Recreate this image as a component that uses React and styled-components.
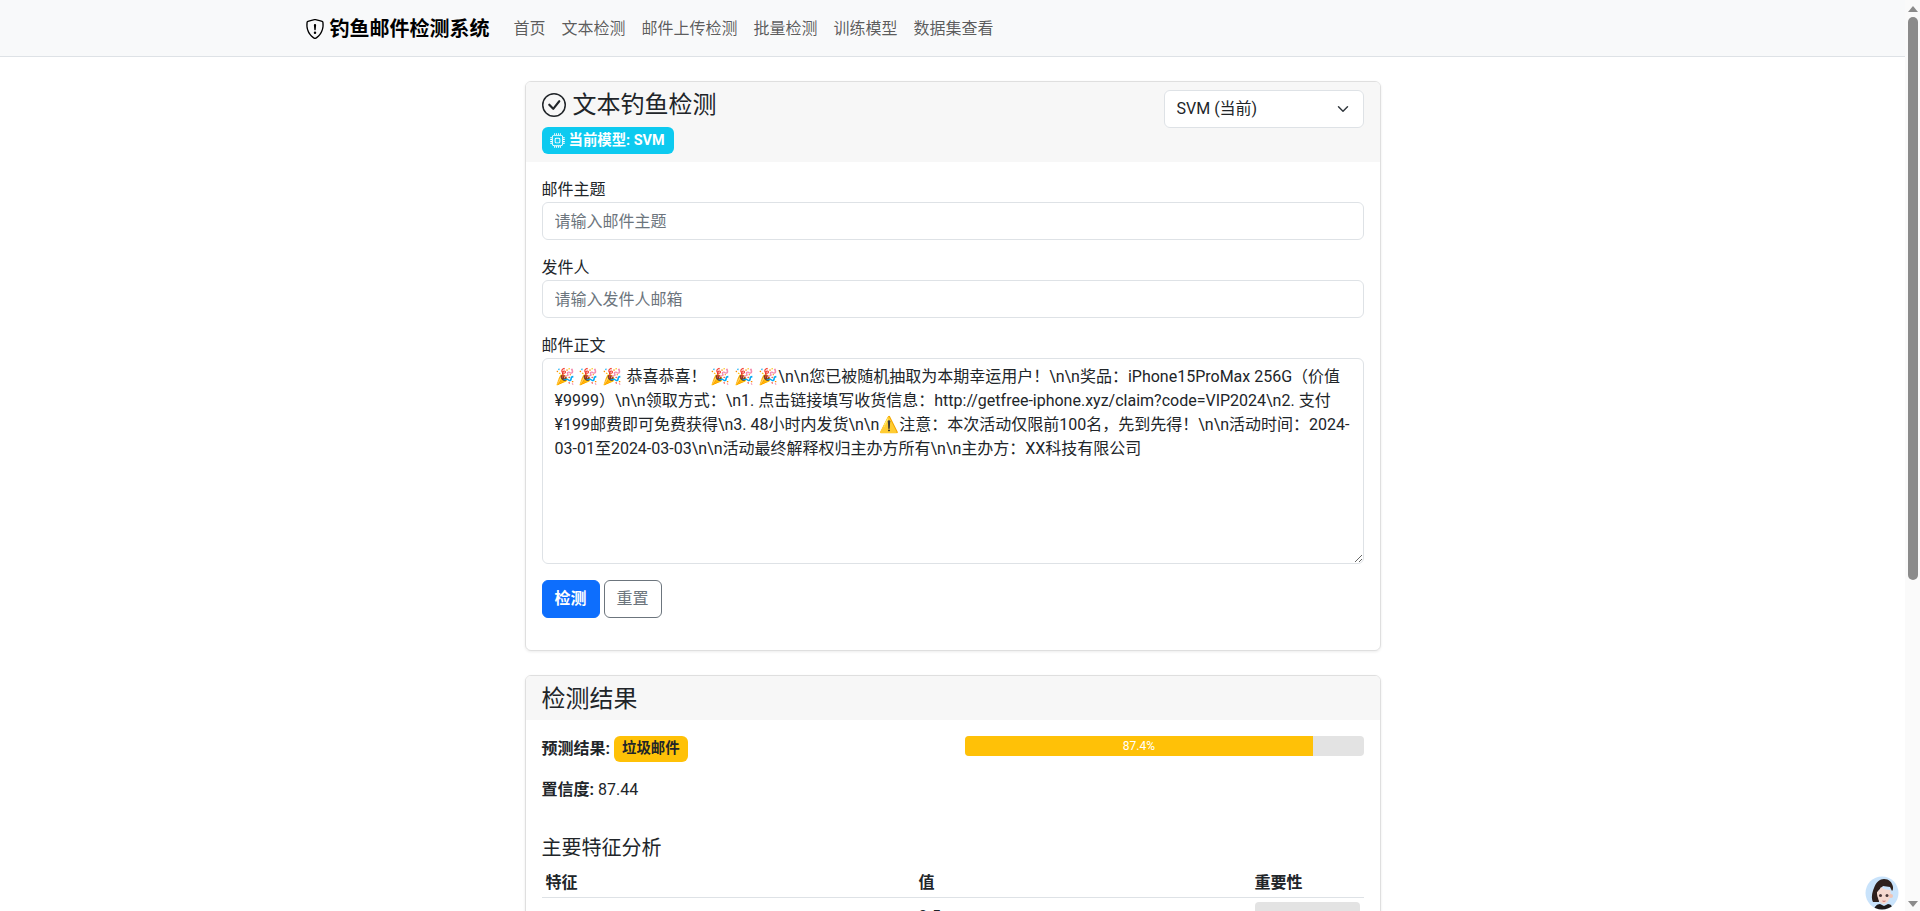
import styled, { createGlobalStyle } from "styled-components";

const GlobalStyle = createGlobalStyle`
    * {
        box-sizing: border-box;
    }

    html {
        overflow: hidden;
    }

    body {
        margin: 0;
        background: #fff;
        color: #212529;
        font-family: Roboto, "Noto Sans CJK SC", sans-serif;
        font-size: 16px;
        line-height: 1.5;
    }
`;

const Page = styled.div`
    padding-right: 15px;
`;

const Navbar = styled.nav`
    height: 57px;
    background: #f8f9fa;
    border-bottom: 1px solid #dee2e6;
`;

const NavInner = styled.div`
    width: 1320px;
    margin: 0 auto;
    padding: 2px 12px 0;
    height: 100%;
    display: flex;
    align-items: center;
`;

const Brand = styled.a`
    display: flex;
    align-items: center;
    gap: 5px;
    margin-right: 16px;
    font-size: 20px;
    font-weight: 700;
    color: #000;
`;

const NavLink = styled.a`
    padding: 8px;
    color: rgba(0, 0, 0, 0.65);
`;

const Main = styled.main`
    width: 880px;
    margin: 0 auto;
    padding: 24px 12px 0;
`;

const Card = styled.section`
    border: 1px solid rgba(0, 0, 0, 0.125);
    border-radius: 6px;
    margin-bottom: 24px;
    overflow: hidden;
    box-shadow: 0 1px 3px rgba(0, 0, 0, 0.08);
`;

const CardHeader = styled.header`
    background: #f7f7f7;
    padding: 8px 16px;
    display: flex;
    justify-content: space-between;
`;

const CardTitle = styled.h4`
    margin: 0;
    padding-top: 2px;
    font-size: 24px;
    font-weight: 400;
    line-height: 26px;
    display: flex;
    align-items: center;
    gap: 7px;
`;

const HeaderText = styled.div`
    display: flex;
    flex-direction: column;
    align-items: flex-start;
    gap: 9px;
`;

const Pill = styled.span`
    display: inline-flex;
    align-items: center;
    gap: 4px;
    padding: 0 9px 0 8px;
    height: 27px;
    border-radius: 6px;
    background: #0dcaf0;
    color: #fff;
    font-size: 14.4px;
    font-weight: 700;
`;

const SpamBadge = styled.span`
    display: inline-flex;
    align-items: center;
    padding: 0 8px;
    height: 26px;
    border-radius: 6px;
    background: #ffc107;
    color: #212529;
    font-size: 14.4px;
    font-weight: 700;
`;

const ModelSelect = styled.div`
    width: 200px;
    height: 38px;
    padding: 0 14px 0 12px;
    display: flex;
    align-items: center;
    justify-content: space-between;
    background: #fff;
    border: 1px solid #dee2e6;
    border-radius: 6px;
`;

const CardBody = styled.div`
    padding: 16px;
`;

const Field = styled.div`
    margin-bottom: 16px;
`;

const Label = styled.label`
    display: block;
`;

const Input = styled.input`
    display: block;
    width: 100%;
    height: 38px;
    padding: 6px 12px;
    border: 1px solid #dee2e6;
    border-radius: 6px;
    font: inherit;
    color: #212529;

    &::placeholder {
        color: #6c757d;
    }
`;

const TextArea = styled.textarea`
    display: block;
    width: 100%;
    height: 206px;
    padding: 6px 12px;
    border: 1px solid #dee2e6;
    border-radius: 6px;
    font: inherit;
    color: #212529;
`;

const Buttons = styled.div`
    display: flex;
    gap: 4px;
    margin-bottom: 16px;
`;

const Button = styled.button`
    height: 38px;
    padding: 0 12px;
    font: inherit;
    font-weight: ${(p) => (p.$primary ? 700 : 400)};
    color: ${(p) => (p.$primary ? "#fff" : "#6c757d")};
    background: ${(p) => (p.$primary ? "#0d6efd" : "#fff")};
    border: 1px solid ${(p) => (p.$primary ? "#0d6efd" : "#6c757d")};
    border-radius: 6px;
`;

const ResultRow = styled.div`
    display: grid;
    grid-template-columns: 1fr 1fr;
    gap: 24px;
`;

const Progress = styled.div`
    height: 20px;
    background: #e3e3e3;
    border-radius: 4px;
    overflow: hidden;
`;

const ProgressFill = styled.div`
    height: 100%;
    background: #ffc107;
    color: #fff;
    font-size: 12px;
    line-height: 20px;
    text-align: center;
`;

const Paragraph = styled.p`
    margin: 0 0 16px;
    display: flex;
    align-items: center;
    gap: 4px;
`;

const SubTitle = styled.h5`
    margin: 18px 0 8px;
    font-size: 20px;
    font-weight: 400;
    line-height: 24px;
`;

const Table = styled.table`
    width: 100%;
    border-collapse: collapse;
    table-layout: fixed;

    th {
        text-align: left;
        padding: 3px 4px 2px;
        border-bottom: 1px solid #dee2e6;
    }

    th:nth-child(1) {
        width: 373px;
    }

    th:nth-child(3) {
        width: 113px;
    }

    td {
        padding: 7px 4px 4px;
        border-bottom: 1px solid #dee2e6;
        vertical-align: top;
    }

    td:last-child {
        padding-top: 4px;
    }
`;

const Meter = styled.div`
    height: 20px;
    background: #e3e3e3;
    border-radius: 4px;
`;

const Scrollbar = styled.div`
    position: fixed;
    top: 0;
    right: 0;
    bottom: 0;
    width: 15px;
    background: #fafafa;
    display: flex;
    flex-direction: column;
    align-items: center;
    justify-content: space-between;
    padding: 6px 0 4px;
`;

const ScrollThumb = styled.div`
    position: absolute;
    top: 17px;
    left: 3px;
    width: 9.500px;
    height: 563px;
    border-radius: 5px;
    background: #8b8b8b;
`;

const Avatar = styled.div`
    position: fixed;
    left: 1865px;
    top: 876px;
    width: 34px;
    height: 34px;
`;

const ShieldIcon = () => (
    <svg width="20" height="20" viewBox="0 0 16 16" fill="currentColor">
        <path d="M5.338 1.59a61 61 0 0 0-2.837.856.48.48 0 0 0-.328.39c-.554 4.157.726 7.19 2.253 9.188a10.7 10.7 0 0 0 2.287 2.233c.346.244.652.42.893.533q.18.085.293.118a1 1 0 0 0 .101.025 1 1 0 0 0 .1-.025q.114-.034.294-.118c.24-.113.547-.29.893-.533a10.7 10.7 0 0 0 2.287-2.233c1.527-1.997 2.807-5.031 2.253-9.188a.48.48 0 0 0-.328-.39c-.651-.213-1.75-.56-2.837-.855C9.552 1.29 8.531 1.067 8 1.067c-.53 0-1.552.223-2.662.524zM5.072.56C6.157.265 7.31 0 8 0s1.843.265 2.928.56c1.11.3 2.229.655 2.887.87a1.54 1.54 0 0 1 1.044 1.262c.596 4.477-.787 7.795-2.465 9.99a11.8 11.8 0 0 1-2.517 2.453 7 7 0 0 1-1.048.625c-.28.132-.581.24-.829.24s-.548-.108-.829-.24a7 7 0 0 1-1.048-.625 11.8 11.8 0 0 1-2.517-2.453C1.928 10.487.545 7.169 1.141 2.692A1.54 1.54 0 0 1 2.185 1.43 63 63 0 0 1 5.072.56" />
        <path d="M7.001 11a1 1 0 1 1 2 0 1 1 0 0 1-2 0M7.1 4.995a.905.905 0 1 1 1.8 0l-.35 3.507a.553.553 0 0 1-1.1 0z" />
    </svg>
);

const CheckCircleIcon = () => (
    <svg width="24" height="24" viewBox="0 0 16 16" fill="currentColor">
        <path d="M8 15A7 7 0 1 1 8 1a7 7 0 0 1 0 14m0 1A8 8 0 1 0 8 0a8 8 0 0 0 0 16" />
        <path d="m10.97 4.97-.02.022-3.473 4.425-2.093-2.094a.75.75 0 0 0-1.06 1.06L6.97 11.03a.75.75 0 0 0 1.079-.02l3.992-4.99a.75.75 0 0 0-1.071-1.05" />
    </svg>
);

const CpuIcon = () => (
    <svg width="15" height="15" viewBox="0 0 16 16" fill="currentColor">
        <path d="M5 0a.5.5 0 0 1 .5.5V2h1V.5a.5.5 0 0 1 1 0V2h1V.5a.5.5 0 0 1 1 0V2h1V.5a.5.5 0 0 1 1 0V2A2.5 2.5 0 0 1 14 4.5h1.5a.5.5 0 0 1 0 1H14v1h1.5a.5.5 0 0 1 0 1H14v1h1.5a.5.5 0 0 1 0 1H14v1h1.5a.5.5 0 0 1 0 1H14a2.5 2.5 0 0 1-2.5 2.500v1.500a.5.5 0 0 1-1 0V14h-1v1.500a.5.5 0 0 1-1 0V14h-1v1.500a.5.5 0 0 1-1 0V14h-1v1.500a.5.5 0 0 1-1 0V14A2.5 2.5 0 0 1 2 11.500H.5a.5.5 0 0 1 0-1H2v-1H.5a.5.5 0 0 1 0-1H2v-1H.5a.5.5 0 0 1 0-1H2v-1H.5a.5.5 0 0 1 0-1H2A2.500 2.500 0 0 1 4.500 2V.5A.5.5 0 0 1 5 0m-.5 3A1.500 1.500 0 0 0 3 4.500v7A1.500 1.500 0 0 0 4.500 13h7a1.500 1.500 0 0 0 1.500-1.500v-7A1.500 1.500 0 0 0 11.500 3zM5 6.500A1.500 1.500 0 0 1 6.500 5h3A1.500 1.500 0 0 1 11 6.500v3A1.500 1.500 0 0 1 9.500 11h-3A1.500 1.500 0 0 1 5 9.500zM6.500 6a.5.5 0 0 0-.5.5v3a.5.5 0 0 0 .5.5h3a.5.5 0 0 0 .5-.5v-3a.5.5 0 0 0-.5-.5z" />
    </svg>
);

const ChevronIcon = () => (
    <svg width="12" height="12" viewBox="0 0 16 16" fill="none" stroke="#343a40" strokeWidth="2" strokeLinecap="round" strokeLinejoin="round">
        <path d="m2 5 6 6 6-6" />
    </svg>
);

const ArrowIcon = ({ down }) => (
    <svg width="10" height="6" viewBox="0 0 10 6" fill="#8b8b8b">
        <path d={down ? "M0 0h10L5 6z" : "M5 0l5 6H0z"} />
    </svg>
);

const AvatarArt = () => (
    <svg width="34" height="34" viewBox="0 0 34 34">
        <defs>
            <clipPath id="avatar-clip">
                <circle cx="17" cy="17" r="16.500" />
            </clipPath>
        </defs>
        <circle cx="17" cy="17" r="17" fill="#fff" />
        <g clipPath="url(#avatar-clip)">
            <rect width="34" height="34" fill="#c9e3fb" />
            <path d="M8 26c-2-4-1-9 1-14 2-6 6-9 10-9 5 0 8 3 9 8 0 2 0 3-1 4l-2-4-7-1-5 5 1 11z" fill="#2e201c" />
            <path d="M12 16c2-1 3-3 4-5 2 2 6 3 9 3 1 2 1 5 0 7-1 4-4 7-6 7s-5-2-6-6c-1-2-1-4-1-6z" fill="#f5d9cf" />
            <circle cx="26" cy="20" r="2" fill="#f0c4b4" />
            <circle cx="15.500" cy="19.500" r="1.500" fill="#4a3838" />
            <circle cx="22" cy="19.500" r="1.500" fill="#4a3838" />
            <path d="M17.500 25q1.500.8 3 0" stroke="#cf6f6b" strokeWidth="1" fill="none" />
            <path d="M9 34c0-3 3-6 6-6l4 2 4-2c3 0 5 3 5 6z" fill="#1f1a1a" />
        </g>
    </svg>
);

const bodyText = "🎉 🎉 🎉 恭喜恭喜！ 🎉 🎉 🎉\\n\\n您已被随机抽取为本期幸运用户！\\n\\n奖品：iPhone15ProMax 256G（价值¥9999）\\n\\n领取方式：\\n1. 点击链接填写收货信息：http://getfree-iphone.xyz/claim?code=VIP2024\\n2. 支付¥199邮费即可免费获得\\n3. 48小时内发货\\n\\n⚠️注意：本次活动仅限前100名，先到先得！\\n\\n活动时间：2024-03-01至2024-03-03\\n\\n活动最终解释权归主办方所有\\n\\n主办方：XX科技有限公司";

const links = ["首页", "文本检测", "邮件上传检测", "批量检测", "训练模型", "数据集查看"];

const features = [
    ["urgent_amounts", "0.5"],
    ["url_count", "0.4"],
    ["money_words", "0.3"],
    ["exclamation_count", "0.3"],
    ["subject_length", "0.2"],
];

const App = () => {
    return (
        <>
            <GlobalStyle />
            <Page>
                <Navbar>
                    <NavInner>
                        <Brand>
                            <ShieldIcon />
                            钓鱼邮件检测系统
                        </Brand>
                        {links.map((link) => (
                            <NavLink key={link}>{link}</NavLink>
                        ))}
                    </NavInner>
                </Navbar>

                <Main>
                    <Card>
                        <CardHeader>
                            <HeaderText>
                                <CardTitle>
                                    <CheckCircleIcon />
                                    文本钓鱼检测
                                </CardTitle>
                                <Pill>
                                    <CpuIcon />
                                    当前模型: SVM
                                </Pill>
                            </HeaderText>
                            <ModelSelect>
                                SVM (当前)
                                <ChevronIcon />
                            </ModelSelect>
                        </CardHeader>
                        <CardBody>
                            <Field>
                                <Label>邮件主题</Label>
                                <Input placeholder="请输入邮件主题" />
                            </Field>
                            <Field>
                                <Label>发件人</Label>
                                <Input placeholder="请输入发件人邮箱" />
                            </Field>
                            <Field>
                                <Label>邮件正文</Label>
                                <TextArea defaultValue={bodyText} />
                            </Field>
                            <Buttons>
                                <Button $primary>检测</Button>
                                <Button>重置</Button>
                            </Buttons>
                        </CardBody>
                    </Card>

                    <Card>
                        <CardHeader>
                            <CardTitle>检测结果</CardTitle>
                        </CardHeader>
                        <CardBody>
                            <ResultRow>
                                <div>
                                    <Paragraph>
                                        <strong>预测结果:</strong>
                                        <SpamBadge>垃圾邮件</SpamBadge>
                                    </Paragraph>
                                    <Paragraph>
                                        <strong>置信度:</strong> 87.44
                                    </Paragraph>
                                </div>
                                <Progress>
                                    <ProgressFill style={{ width: "87.44%" }}>87.4%</ProgressFill>
                                </Progress>
                            </ResultRow>
                            <SubTitle>主要特征分析</SubTitle>
                            <Table>
                                <thead>
                                    <tr>
                                        <th>特征</th>
                                        <th>值</th>
                                        <th>重要性</th>
                                    </tr>
                                </thead>
                                <tbody>
                                    {features.map(([name, value]) => (
                                        <tr key={name}>
                                            <td>{name}</td>
                                            <td>{value}</td>
                                            <td><Meter /></td>
                                        </tr>
                                    ))}
                                </tbody>
                            </Table>
                        </CardBody>
                    </Card>
                </Main>
            </Page>

            <Scrollbar>
                <ArrowIcon />
                <ScrollThumb />
                <ArrowIcon down />
            </Scrollbar>

            <Avatar>
                <AvatarArt />
            </Avatar>
        </>
    );
};

export default App;
